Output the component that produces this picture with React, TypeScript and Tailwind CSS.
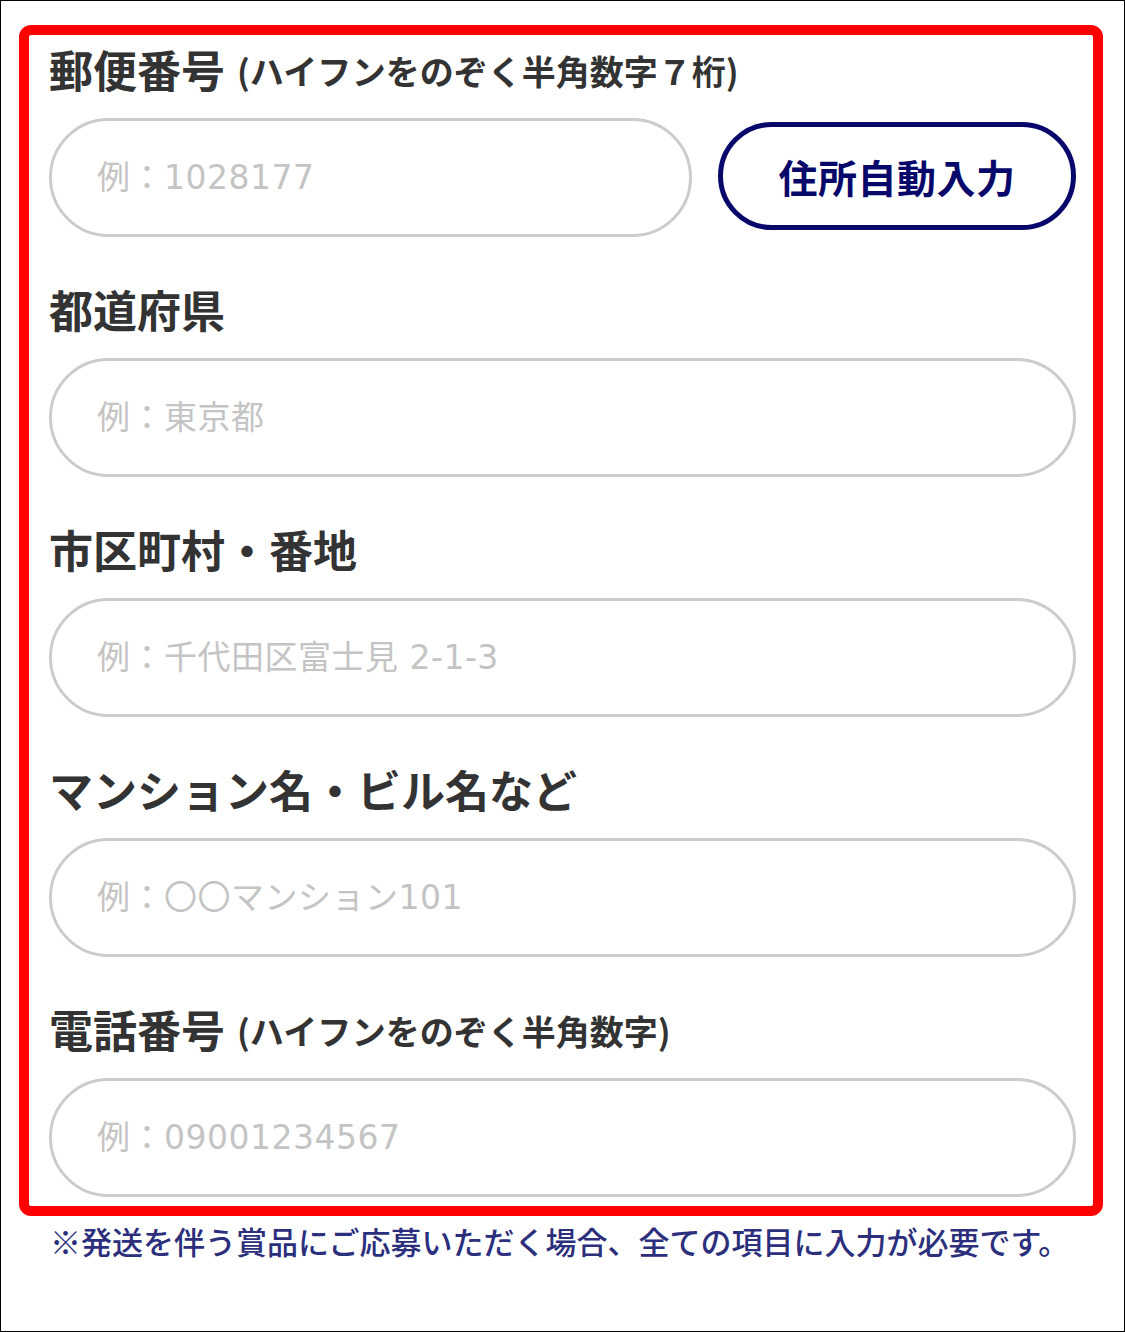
import React from 'react';

const font = { fontFamily: '"Noto Sans CJK JP", "Noto Sans", sans-serif' };
const inputFont = { fontFamily: '"DejaVu Sans", "Noto Sans CJK JP", sans-serif' };

const fields = [
  { label: '都道府県', note: '', placeholder: '例：東京都' },
  { label: '市区町村・番地', note: '', placeholder: '例：千代田区富士見 2-1-3' },
  { label: 'マンション名・ビル名など', note: '', placeholder: '例：〇〇マンション101' },
  { label: '電話番号', note: '(ハイフンをのぞく半角数字)', placeholder: '例：09001234567' },
];

function Label({ label, note }: { label: string; note?: string }) {
  return (
    <div className="h-[48px] flex items-center gap-[12px] text-[#333333] font-bold">
      <span className="text-[44px] leading-none">{label}</span>
      {note && <span className="text-[34px] leading-none pt-[4px]">{note}</span>}
    </div>
  );
}

function Input({ placeholder, className = '' }: { placeholder: string; className?: string }) {
  return (
    <div
      className={
        'h-[119px] rounded-full border-[3px] border-[#cccccc] bg-white flex items-center pl-[45px] ' +
        className
      }
    >
      <input
        placeholder={placeholder}
        className="w-full bg-transparent outline-none text-[33px] tracking-[0.5px] placeholder:text-[#c4c4c4]"
        style={inputFont}
      />
    </div>
  );
}

export default function App() {
  return (
    <div className="w-[1125px] h-[1332px] border border-black bg-white flex flex-col" style={font}>
      <div className="mt-[24px] ml-[18px] mr-[21px] border-[10px] border-[#ff0000] rounded-[12px] pt-[10px] pb-[9px] pl-[20px] pr-[17px]">
        <Label label="郵便番号" note="(ハイフンをのぞく半角数字７桁)" />
        <div className="mt-[25px] flex items-center gap-[26px]">
          <Input placeholder="例：1028177" className="flex-1" />
          <button className="w-[358px] h-[108px] -mt-[3px] rounded-full border-[5px] border-[#08086b] text-[#08086b] text-[39px] font-bold tracking-[0.5px]">
            住所自動入力
          </button>
        </div>
        {fields.map((f) => (
          <div key={f.label} className="mt-[48px]">
            <Label label={f.label} note={f.note} />
            <Input placeholder={f.placeholder} className="mt-[25px]" />
          </div>
        ))}
      </div>
      <p className="mt-[5px] pl-[49px] text-[31px] leading-[40px] text-[#2c2f7c] font-medium">
        ※発送を伴う賞品にご応募いただく場合、全ての項目に入力が必要です。
      </p>
    </div>
  );
}
